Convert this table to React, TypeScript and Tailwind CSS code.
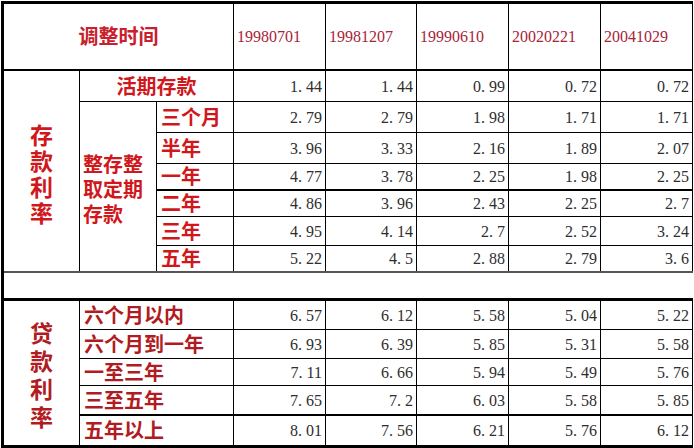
import React from "react";

const dates = ["19980701", "19981207", "19990610", "20020221", "20041029"];

const fmt = (v: string) => v.replace(".", ". ");

const deposit: { label: string; vals: string[]; h: string; bt?: string }[] = [
  { label: "三个月", vals: ["2.79", "2.79", "1.98", "1.71", "1.71"], h: "h-[31px]" },
  { label: "半年", vals: ["3.96", "3.33", "2.16", "1.89", "2.07"], h: "h-[31px]" },
  { label: "一年", vals: ["4.77", "3.78", "2.25", "1.98", "2.25"], h: "h-[27px]" },
  { label: "二年", vals: ["4.86", "3.96", "2.43", "2.25", "2.7"], h: "h-[26px]", bt: "border-t-2" },
  { label: "三年", vals: ["4.95", "4.14", "2.7", "2.52", "3.24"], h: "h-[29px]" },
  { label: "五年", vals: ["5.22", "4.5", "2.88", "2.79", "3.6"], h: "h-[27px]" },
];

const loan: { label: string; vals: string[]; h: string; bt?: string }[] = [
  { label: "六个月以内", vals: ["6.57", "6.12", "5.58", "5.04", "5.22"], h: "h-[30px]", bt: "border-t-[3px]" },
  { label: "六个月到一年", vals: ["6.93", "6.39", "5.85", "5.31", "5.58"], h: "h-[29px]" },
  { label: "一至三年", vals: ["7.11", "6.66", "5.94", "5.49", "5.76"], h: "h-[27px]" },
  { label: "三至五年", vals: ["7.65", "7.2", "6.03", "5.58", "5.85"], h: "h-[30px]" },
  { label: "五年以上", vals: ["8.01", "7.56", "6.21", "5.76", "6.12"], h: "h-[31px]", bt: "border-t-2" },
];

const cjk = { fontFamily: '"Noto Sans CJK SC", "Noto Sans", sans-serif' };
const serif = { fontFamily: '"Liberation Serif", "DejaVu Serif", serif' };

function Num({ v, extra = "" }: { v: string; extra?: string }) {
  return (
    <td
      className={`border border-black text-right align-middle pr-[3px] pt-[2px] text-[16px] leading-none text-[#2e2e2e] ${extra}`}
      style={serif}
    >
      {fmt(v)}
    </td>
  );
}

export default function App() {
  return (
    <div className="w-[694px] h-[448px] bg-white overflow-hidden pl-[1px] pt-[1px]">
      <table className="table-fixed border-collapse w-[692px]">
        <colgroup>
          <col className="w-[77px]" />
          <col className="w-[77px]" />
          <col className="w-[77px]" />
          <col className="w-[92px]" />
          <col className="w-[91px]" />
          <col className="w-[92px]" />
          <col className="w-[92px]" />
          <col className="w-[92px]" />
        </colgroup>
        <tbody>
          <tr className="h-[67px]">
            <td
              colSpan={3}
              className="border border-black border-t-[3px] border-l-[3px] border-b-2 text-center align-middle text-[20px] font-bold text-[#c8202c]"
              style={cjk}
            >
              调整时间
            </td>
            {dates.map((d) => (
              <td
                key={d}
                className="border border-black border-t-[3px] border-b-2 text-left align-middle pl-[3px] pt-[2px] text-[16px] text-[#a82438]"
                style={serif}
              >
                {d}
              </td>
            ))}
          </tr>
          <tr className="h-[31px]">
            <td
              rowSpan={7}
              className="border border-black border-l-[3px] border-b-2 border-b-[#555] align-middle text-center"
            >
              <div
                className="mx-auto w-[24px] break-all text-[23px] leading-[26px] font-bold text-[#d0181c] pt-[4px]"
                style={cjk}
              >
                存款利率
              </div>
            </td>
            <td
              colSpan={2}
              className="border border-black text-center align-middle text-[20px] font-bold text-[#d0181c]"
              style={cjk}
            >
              活期存款
            </td>
            {["1.44", "1.44", "0.99", "0.72", "0.72"].map((v, i) => (
              <Num key={i} v={v} />
            ))}
          </tr>
          {deposit.map((r, ri) => (
            <tr key={r.label} className={r.h}>
              {ri === 0 && (
                <td
                  rowSpan={6}
                  className="border border-black border-b-2 border-b-[#555] align-middle text-left pl-[3px]"
                >
                  <div
                    className="w-[64px] break-all text-[20px] leading-[25px] font-bold text-[#d0181c] pt-[4px]"
                    style={cjk}
                  >
                    整存整取定期存款
                  </div>
                </td>
              )}
              <td
                className={`border border-black ${r.bt ?? ""} ${ri === 5 ? "border-b-2 border-b-[#555]" : ""} text-left align-middle pl-[4px] text-[20px] font-bold text-[#d0181c] leading-none`}
                style={cjk}
              >
                {r.label}
              </td>
              {r.vals.map((v, i) => (
                <Num key={i} v={v} extra={`${r.bt ?? ""} ${ri === 5 ? "border-b-2 border-b-[#555]" : ""}`} />
              ))}
            </tr>
          ))}
          <tr className="h-[27px]">
            <td colSpan={8} className="border-l-[3px] border-l-black border-r-0"></td>
          </tr>
          {loan.map((r, ri) => (
            <tr key={r.label} className={r.h}>
              {ri === 0 && (
                <td
                  rowSpan={5}
                  className="border border-black border-t-[3px] border-l-[3px] border-b-[3px] align-middle text-center"
                >
                  <div
                    className="mx-auto w-[24px] break-all text-[23px] leading-[28px] font-bold text-[#b01c22] pt-[2px]"
                    style={cjk}
                  >
                    贷款利率
                  </div>
                </td>
              )}
              <td
                colSpan={2}
                className={`border border-black ${r.bt ?? ""} ${ri === 4 ? "border-b-[3px]" : ""} text-left align-middle pl-[4px] text-[20px] font-bold text-[#b01c22] leading-none`}
                style={cjk}
              >
                {r.label}
              </td>
              {r.vals.map((v, i) => (
                <Num key={i} v={v} extra={`${r.bt ?? ""} ${ri === 4 ? "border-b-[3px]" : ""}`} />
              ))}
            </tr>
          ))}
        </tbody>
      </table>
    </div>
  );
}
